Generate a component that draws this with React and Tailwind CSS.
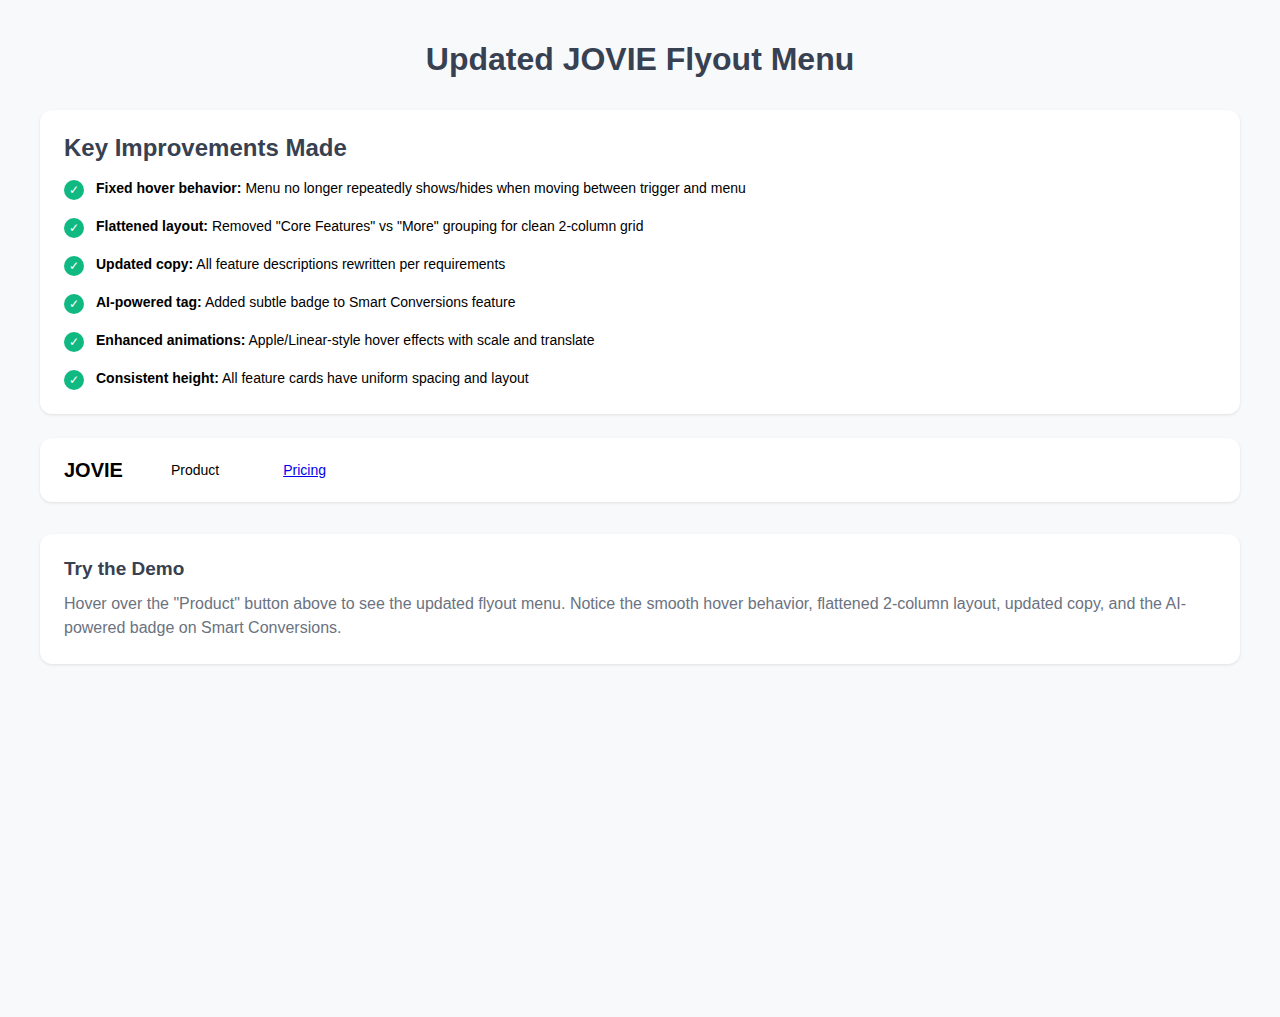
const improvements = [
  ["Fixed hover behavior:", "Menu no longer repeatedly shows/hides when moving between trigger and menu"],
  ["Flattened layout:", 'Removed "Core Features" vs "More" grouping for clean 2-column grid'],
  ["Updated copy:", "All feature descriptions rewritten per requirements"],
  ["AI-powered tag:", "Added subtle badge to Smart Conversions feature"],
  ["Enhanced animations:", "Apple/Linear-style hover effects with scale and translate"],
  ["Consistent height:", "All feature cards have uniform spacing and layout"],
];

const card = "rounded-xl bg-white shadow-[0_1px_3px_rgba(0,0,0,0.1)]";

export default function App() {
  return (
    <div className="min-h-screen bg-[#f8f9fb] p-10 font-['Liberation_Sans',Arial,sans-serif] text-black">
      <main className="mx-auto max-w-[1200px]">
        <h1 className="mb-8 text-center text-[32px] leading-[38px] font-bold text-[#374151]">
          Updated JOVIE Flyout Menu
        </h1>

        <section className={`${card} mb-6 p-6`}>
          <h2 className="mb-4 text-2xl leading-[28px] font-bold text-[#374151]">Key Improvements Made</h2>
          <ul className="flex flex-col gap-4">
            {improvements.map(([title, text]) => (
              <li key={title} className="flex items-start gap-3">
                <span className="mt-0.5 flex size-5 shrink-0 items-center justify-center rounded-full bg-[#10b981] text-xs text-white">
                  ✓
                </span>
                <p className="text-sm leading-5">
                  <strong className="font-bold">{title}</strong> {text}
                </p>
              </li>
            ))}
          </ul>
        </section>

        <nav className={`${card} mb-8 flex items-center gap-8 px-6 py-4`}>
          <span className="text-xl leading-8 font-bold">JOVIE</span>
          <button type="button" className="px-4 text-sm">Product</button>
          <a href="#pricing" className="px-4 text-sm text-[#0000ee] underline">Pricing</a>
        </nav>

        <section className={`${card} p-6`}>
          <h3 className="mb-3 text-[19px] leading-[22px] font-bold text-[#374151]">Try the Demo</h3>
          <p className="text-base leading-6 text-[#6b7280]">
            Hover over the "Product" button above to see the updated flyout menu. Notice the smooth hover
            behavior, flattened 2-column layout, updated copy, and the AI-powered badge on Smart Conversions.
          </p>
        </section>
      </main>
    </div>
  );
}
